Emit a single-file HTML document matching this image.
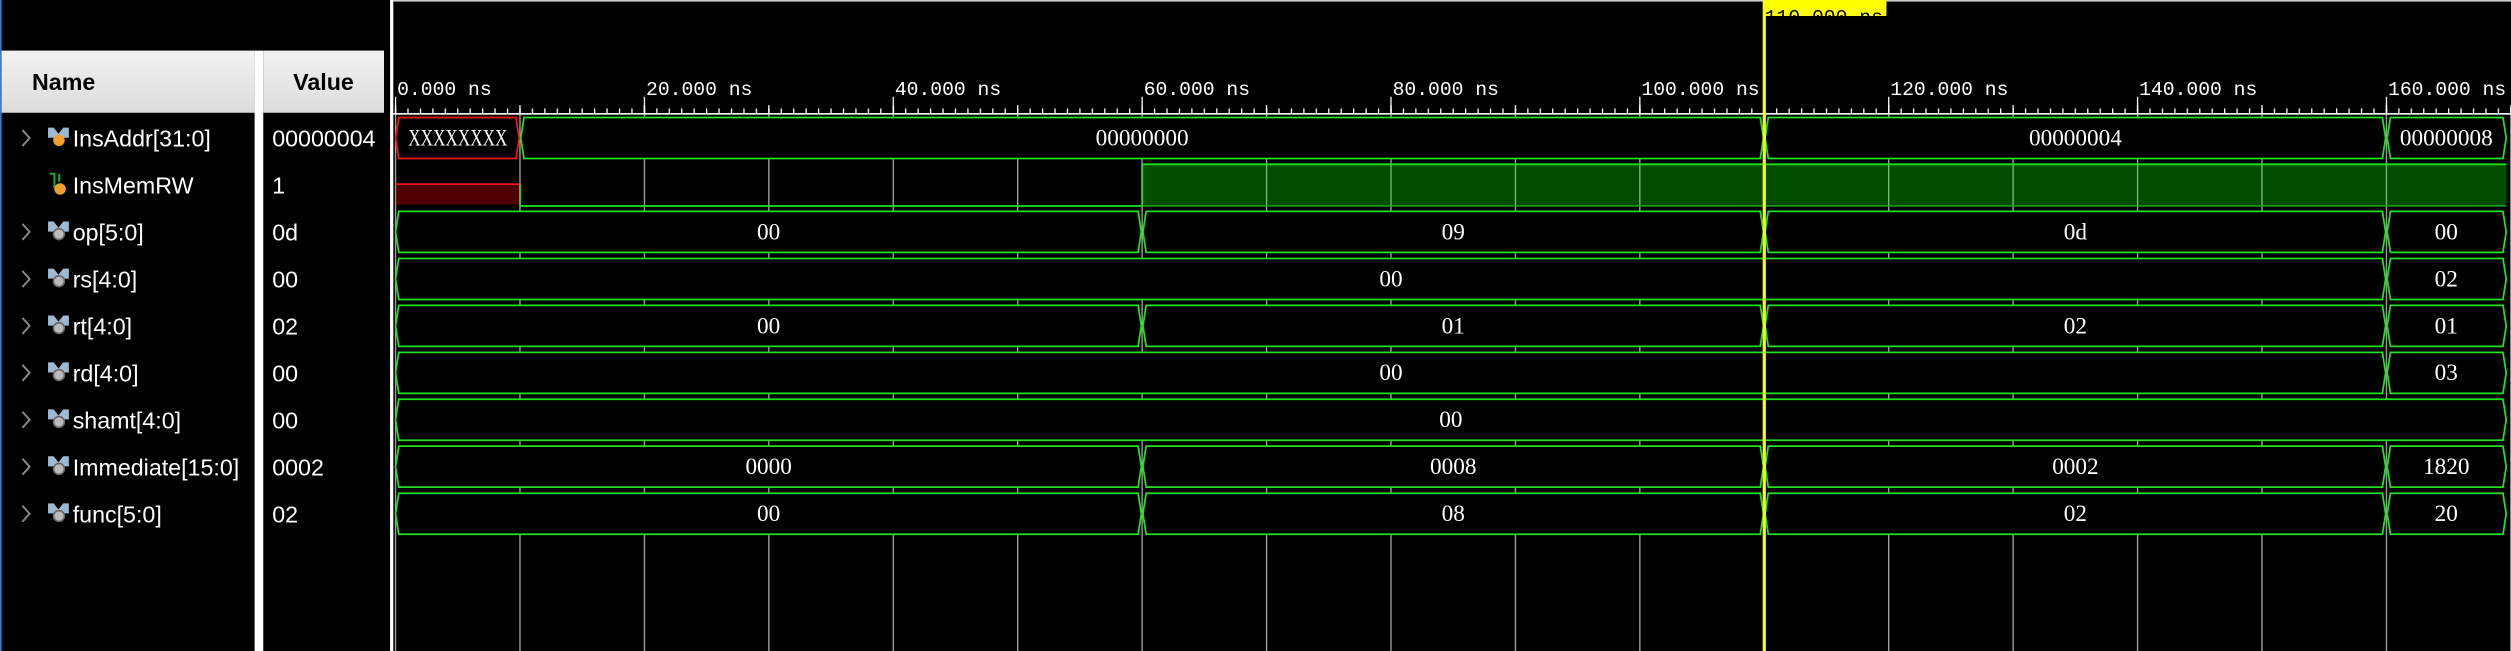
<!DOCTYPE html>
<html><head><meta charset="utf-8"><style>
html,body{margin:0;padding:0;background:#000;overflow:hidden}
svg{display:block}
.nm{font-family:"Liberation Sans",sans-serif;font-size:14.5px;fill:#fff}
.bv{font-family:"Liberation Serif",serif;font-size:14.5px;fill:#fff;text-anchor:middle}
.tl{font-family:"Liberation Mono",monospace;font-size:12.3px;fill:#fff}
.bus{fill:#000;stroke:#22e022;stroke-width:1.1}
</style></head><body>
<svg width="2511" height="651" viewBox="0 0 1568 406.5" preserveAspectRatio="none" xmlns="http://www.w3.org/2000/svg">
<defs>
<linearGradient id="hg" x1="0" y1="0" x2="0" y2="1"><stop offset="0" stop-color="#f2f2f2"/><stop offset="1" stop-color="#dcdcdc"/></linearGradient>
<pattern id="pmin" x="246.6" y="0" width="7.77" height="406.5" patternUnits="userSpaceOnUse"><rect x="0" y="67.7" width="0.8" height="3.2" fill="#fff"/></pattern>
<pattern id="pmed" x="246.6" y="0" width="77.7" height="406.5" patternUnits="userSpaceOnUse"><rect x="0" y="65.6" width="0.8" height="5.3" fill="#fff"/><rect x="0" y="71" width="0.8" height="340" fill="#a8a8a8"/></pattern>
<pattern id="pmaj" x="246.6" y="0" width="155.4" height="406.5" patternUnits="userSpaceOnUse"><rect x="0" y="60.4" width="0.8" height="10.5" fill="#fff"/></pattern>
<clipPath id="yc"><rect x="1101" y="0" width="77" height="10"/></clipPath>
<polygon id="r010" points="249,-12.8 322.2,-12.8 324.2,0 322.2,12.8 249,12.8 247,0"/>
<polygon id="rA1" points="327.2,-12.8 1099.2,-12.8 1101.2,0 1099.2,12.8 327.2,12.8 325.2,0"/>
<polygon id="r060" points="249,-12.8 710.7,-12.8 712.7,0 710.7,12.8 249,12.8 247,0"/>
<polygon id="r60110" points="715.7,-12.8 1099.2,-12.8 1101.2,0 1099.2,12.8 715.7,12.8 713.7,0"/>
<polygon id="r110160" points="1104.2,-12.8 1487.7,-12.8 1489.7,0 1487.7,12.8 1104.2,12.8 1102.2,0"/>
<polygon id="r160e" points="1492.7,-12.8 1563,-12.8 1565,0 1563,12.8 1492.7,12.8 1490.7,0"/>
<polygon id="r0160" points="249,-12.8 1487.7,-12.8 1489.7,0 1487.7,12.8 249,12.8 247,0"/>
<polygon id="r0e" points="249,-12.8 1563,-12.8 1565,0 1563,12.8 249,12.8 247,0"/>
</defs>
<rect width="1568" height="406.5" fill="#000"/>
<rect x="0" y="0" width="1" height="406.5" fill="#3a78c8"/>
<rect x="1" y="31.6" width="158" height="38.8" fill="url(#hg)"/>
<rect x="164.4" y="31.6" width="75.4" height="38.8" fill="url(#hg)"/>
<rect x="159" y="31.6" width="5.4" height="375" fill="#fff"/>
<rect x="243.6" y="0" width="2" height="406.5" fill="#fff"/>
<text x="20" y="56.2" class="nm" style="font-weight:bold;fill:#000">Name</text>
<text x="202" y="56.2" class="nm" style="font-weight:bold;fill:#000;text-anchor:middle">Value</text>
<g fill="none" stroke="#8a8a8a" stroke-width="1.2">
<polyline points="14,81.2 18.5,86.2 14,91.2"/>
<polyline points="14,139.8 18.5,144.8 14,149.8"/>
<polyline points="14,169.2 18.5,174.2 14,179.2"/>
<polyline points="14,198.5 18.5,203.5 14,208.5"/>
<polyline points="14,227.8 18.5,232.8 14,237.8"/>
<polyline points="14,257.1 18.5,262.1 14,267.1"/>
<polyline points="14,286.4 18.5,291.4 14,296.4"/>
<polyline points="14,315.8 18.5,320.8 14,325.8"/>
</g>
<polygon points="30,79.7 33.5,79.7 36.5,83.5 39.5,79.7 43,79.7 43,86 30,86" fill="#9fbad0"/><circle cx="36.8" cy="87.6" r="3.6" fill="#f0a030"/>
<path d="M31,108.5 h3 v9 M34,108.5 v9 M37,108.5 v5" stroke="#2aa02a" stroke-width="1.3" fill="none"/><circle cx="37.5" cy="118" r="3.6" fill="#f0a030"/>
<g fill="#9fbad0">
<polygon points="30,138.3 33.5,138.3 36.5,142.1 39.5,138.3 43,138.3 43,144.6 30,144.6"/>
<polygon points="30,167.7 33.5,167.7 36.5,171.5 39.5,167.7 43,167.7 43,174 30,174"/>
<polygon points="30,197 33.5,197 36.5,200.8 39.5,197 43,197 43,203.3 30,203.3"/>
<polygon points="30,226.3 33.5,226.3 36.5,230.1 39.5,226.3 43,226.3 43,232.6 30,232.6"/>
<polygon points="30,255.6 33.5,255.6 36.5,259.4 39.5,255.6 43,255.6 43,261.9 30,261.9"/>
<polygon points="30,284.9 33.5,284.9 36.5,288.7 39.5,284.9 43,284.9 43,291.2 30,291.2"/>
<polygon points="30,314.3 33.5,314.3 36.5,318.1 39.5,314.3 43,314.3 43,320.6 30,320.6"/>
</g>
<g fill="#bbb" stroke="#666" stroke-width="1">
<circle cx="36.8" cy="146.2" r="3.4"/><circle cx="36.8" cy="175.6" r="3.4"/><circle cx="36.8" cy="204.9" r="3.4"/><circle cx="36.8" cy="234.2" r="3.4"/><circle cx="36.8" cy="263.5" r="3.4"/><circle cx="36.8" cy="292.8" r="3.4"/><circle cx="36.8" cy="322.2" r="3.4"/>
</g>
<g class="nm">
<text x="45.4" y="91.6">InsAddr[31:0]</text>
<text x="45.4" y="120.9">InsMemRW</text>
<text x="45.4" y="150.2">op[5:0]</text>
<text x="45.4" y="179.6">rs[4:0]</text>
<text x="45.4" y="208.9">rt[4:0]</text>
<text x="45.4" y="238.2">rd[4:0]</text>
<text x="45.4" y="267.5">shamt[4:0]</text>
<text x="45.4" y="296.8">Immediate[15:0]</text>
<text x="45.4" y="326.2">func[5:0]</text>
<text x="170" y="91.6">00000004</text>
<text x="170" y="120.9">1</text>
<text x="170" y="150.2">0d</text>
<text x="170" y="179.6">00</text>
<text x="170" y="208.9">02</text>
<text x="170" y="238.2">00</text>
<text x="170" y="267.5">00</text>
<text x="170" y="296.8">0002</text>
<text x="170" y="326.2">02</text>
</g>
<rect x="245.6" y="0" width="1323" height="1" fill="#ccc"/>
<rect x="245.6" y="0" width="1323" height="406.5" fill="url(#pmin)"/>
<rect x="245.6" y="0" width="1323" height="406.5" fill="url(#pmed)"/>
<rect x="245.6" y="0" width="1323" height="406.5" fill="url(#pmaj)"/>
<rect x="245.6" y="70.6" width="1322.4" height="1" fill="#fff"/>
<g class="tl">
<text x="248" y="59.3">0.000 ns</text>
<text x="403.4" y="59.3">20.000 ns</text>
<text x="558.8" y="59.3">40.000 ns</text>
<text x="714.2" y="59.3">60.000 ns</text>
<text x="869.6" y="59.3">80.000 ns</text>
<text x="1025" y="59.3">100.000 ns</text>
<text x="1180.4" y="59.3">120.000 ns</text>
<text x="1335.8" y="59.3">140.000 ns</text>
<text x="1491.2" y="59.3">160.000 ns</text>
</g>
<use href="#r010" y="86.2" style="fill:#000;stroke:#f01414;stroke-width:1.1"/>
<use href="#rA1" y="86.2" class="bus"/>
<use href="#r110160" y="86.2" class="bus"/>
<use href="#r160e" y="86.2" class="bus"/>
<rect x="247" y="115" width="77.2" height="12.8" fill="#ff0000" fill-opacity="0.31"/>
<line x1="247" y1="115" x2="324.2" y2="115" stroke="#f01414" stroke-width="1.1"/>
<line x1="324.7" y1="115" x2="324.7" y2="128.6" stroke="#22e022" stroke-width="1.1"/>
<line x1="324.7" y1="128.6" x2="713.2" y2="128.6" stroke="#22e022" stroke-width="1.1"/>
<rect x="713.2" y="102.6" width="852" height="26" fill="#00ff00" fill-opacity="0.3"/>
<polyline points="713.2,128.6 713.2,102.6 1565,102.6" fill="none" stroke="#22e022" stroke-width="1.1"/>
<line x1="713.2" y1="128.6" x2="1565" y2="128.6" stroke="#22b022" stroke-width="0.8"/>
<use href="#r060" y="144.8" class="bus"/><use href="#r60110" y="144.8" class="bus"/><use href="#r110160" y="144.8" class="bus"/><use href="#r160e" y="144.8" class="bus"/>
<use href="#r0160" y="174.2" class="bus"/><use href="#r160e" y="174.2" class="bus"/>
<use href="#r060" y="203.5" class="bus"/><use href="#r60110" y="203.5" class="bus"/><use href="#r110160" y="203.5" class="bus"/><use href="#r160e" y="203.5" class="bus"/>
<use href="#r0160" y="232.8" class="bus"/><use href="#r160e" y="232.8" class="bus"/>
<use href="#r0e" y="262.1" class="bus"/>
<use href="#r060" y="291.4" class="bus"/><use href="#r60110" y="291.4" class="bus"/><use href="#r110160" y="291.4" class="bus"/><use href="#r160e" y="291.4" class="bus"/>
<use href="#r060" y="320.8" class="bus"/><use href="#r60110" y="320.8" class="bus"/><use href="#r110160" y="320.8" class="bus"/><use href="#r160e" y="320.8" class="bus"/>
<g class="bv">
<text x="285.9" y="90.8" textLength="62" lengthAdjust="spacingAndGlyphs">XXXXXXXX</text>
<text x="713.2" y="90.8">00000000</text>
<text x="1296" y="90.8">00000004</text>
<text x="1527.6" y="90.8">00000008</text>
<text x="480" y="149.4">00</text><text x="907.5" y="149.4">09</text><text x="1296" y="149.4">0d</text><text x="1527.6" y="149.4">00</text>
<text x="868.6" y="178.8">00</text><text x="1527.6" y="178.8">02</text>
<text x="480" y="208.1">00</text><text x="907.5" y="208.1">01</text><text x="1296" y="208.1">02</text><text x="1527.6" y="208.1">01</text>
<text x="868.6" y="237.4">00</text><text x="1527.6" y="237.4">03</text>
<text x="906" y="266.7">00</text>
<text x="480" y="296">0000</text><text x="907.5" y="296">0008</text><text x="1296" y="296">0002</text><text x="1527.6" y="296">1820</text>
<text x="480" y="325.4">00</text><text x="907.5" y="325.4">08</text><text x="1296" y="325.4">02</text><text x="1527.6" y="325.4">20</text>
</g>
<rect x="1101" y="0" width="77" height="10" fill="#ffff00"/>
<text x="1102" y="14.5" class="tl" clip-path="url(#yc)" style="fill:#000">110.000 ns</text>
<rect x="1100.7" y="0" width="2" height="406.5" fill="#ffff00"/>
</svg>
</body></html>
